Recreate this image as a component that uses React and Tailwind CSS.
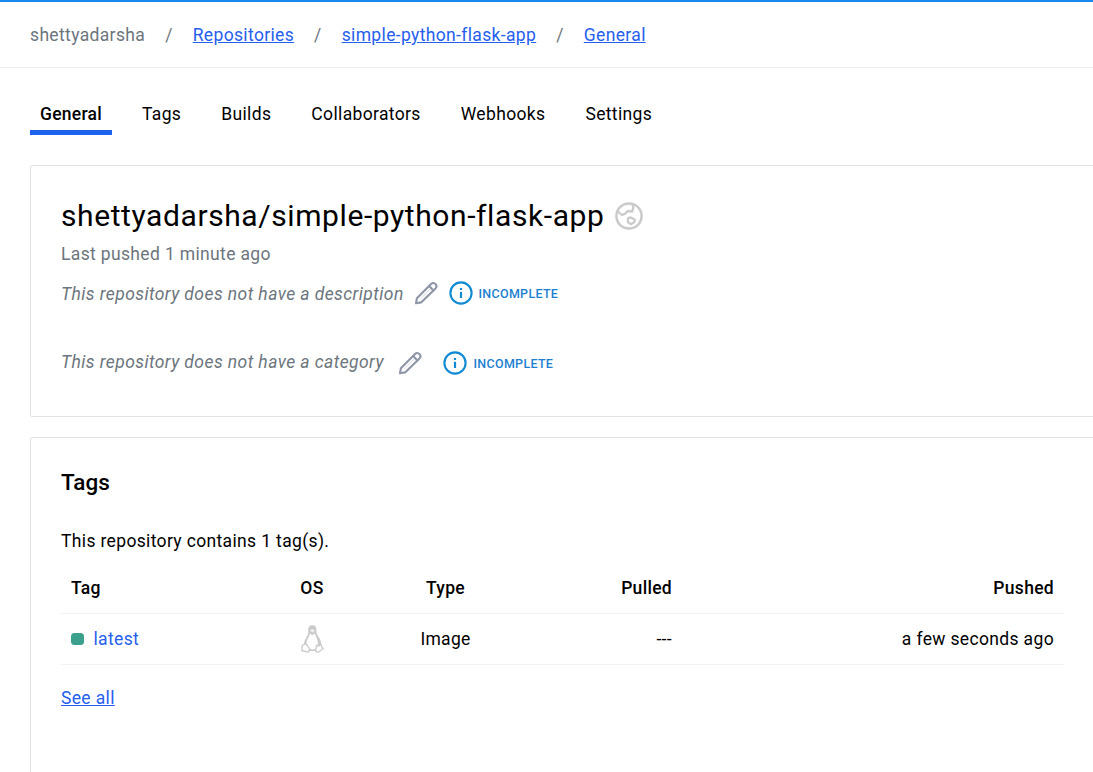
import React from "react";

function GlobeIcon() {
  return (
    <svg className="size-7 shrink-0" viewBox="0 0 28 28" fill="none" stroke="#cacaca" strokeWidth="2.5" strokeLinejoin="round">
      <circle cx="14" cy="14" r="12.6" />
      <path d="M2.3 9 L6.9 13 L10.3 11.6 L12.4 9.2 L17.2 9.5 L18.3 5.5 L17.4 2" strokeWidth="2.3" />
      <path d="M12.9 16.4 L15.6 15.4 L19.7 17.5 L19.5 20 L15.8 22.2 L12.9 20 Z" strokeWidth="2.2" />
    </svg>
  );
}

function PencilIcon() {
  return (
    <svg className="size-6 shrink-0" viewBox="0 0 24 24" fill="none" stroke="#8f96a8" strokeWidth="2.1" strokeLinejoin="round" strokeLinecap="round">
      <path d="M2 22.3 L2.9 17.2 L17.3 2.8 C19.8 0.3 24.3 4.4 21.5 7.4 L7.1 21.4 Z" />
      <path d="M15.2 5 L19.4 9.4" />
      <path d="M6.3 18 L16 8.2" strokeWidth="1" opacity="0.35" />
    </svg>
  );
}

function InfoIcon() {
  return (
    <svg className="size-6 shrink-0" viewBox="0 0 24 24" fill="none" stroke="#0f8ad3">
      <circle cx="12" cy="12" r="10.6" strokeWidth="2.1" />
      <path d="M12 7 V9" strokeWidth="2.2" />
      <path d="M12 10.8 V17" strokeWidth="2.2" />
    </svg>
  );
}

function PenguinIcon() {
  return (
    <svg className="mx-auto mb-0.5 h-7 w-[23px]" viewBox="0 0 23 28" strokeLinejoin="round">
      <path d="M11.3 0.3 C8.6 0.3 7.1 2 7.2 4.6 C7.3 8.2 7.5 9 5.6 12 C4 14.6 2.9 16.8 3 20 L6 26 H17 L20.2 20 C20.4 16.5 19.2 14.2 17.6 12 C15.8 9.5 15.4 8.4 15.4 4.8 C15.4 1.8 14 0.3 11.3 0.3 Z" fill="#cacaca" />
      <path d="M8.9 8.8 L11.4 10 L13.8 8.6 C14.3 10.8 16.6 13.6 16.8 17.5 C17 21.8 15.3 24.4 11.3 24.4 C8 24.4 5.5 21 5.5 18 C5.5 14.4 8.3 11.8 8.9 8.8 Z" fill="#fff" />
      <path d="M8.8 5.2 L11.3 4.3 L14 5.2 L11.4 7.6 Z" fill="#f3f3f3" />
      <path d="M1.1 20.8 L3.6 19 L5.4 19.3 L8.4 23.6 L8.3 26 L6.8 27.2 L0.8 25.5 Z" fill="#fff" stroke="#cacaca" strokeWidth="1.3" />
      <path d="M15.4 20.2 L17.5 21 L20 19.4 L20.8 21.8 L22.2 23.5 L17.6 27.1 L15.3 26.8 L14.7 25.4 Z" fill="#fff" stroke="#cacaca" strokeWidth="1.3" />
    </svg>
  );
}

function Incomplete({ className }) {
  return (
    <div className={className}>
      <InfoIcon />
      <span className="text-[12.5px] font-medium tracking-[0.3px] text-[#1d7fd0]">INCOMPLETE</span>
    </div>
  );
}

function Crumb({ children }) {
  return <a className="text-[#2560ed] underline underline-offset-1">{children}</a>;
}

const tabs = ["Tags", "Builds", "Collaborators", "Webhooks", "Settings"];

export default function App() {
  return (
    <div className="flex h-[772px] w-[1093px] flex-col overflow-hidden bg-white font-['Roboto',sans-serif] text-[17.5px] leading-[25px] tracking-[0.35px] text-black">
      <div className="h-0.5 shrink-0 bg-[#1a86ec]" />
      <nav className="flex h-[66px] shrink-0 items-center gap-5 border-b border-[#eeeff0] pt-0.5 pl-[30px] text-[#6c757d]">
        <span>shettyadarsha</span>
        <span>/</span>
        <Crumb>Repositories</Crumb>
        <span>/</span>
        <Crumb>simple-python-flask-app</Crumb>
        <span>/</span>
        <Crumb>General</Crumb>
      </nav>

      <div className="mt-[33px] flex h-[34px] shrink-0 gap-5 pl-[30px]">
        <div className="w-[82px] border-b-[5px] border-[#1d63ed] px-2.5 pt-px font-medium tracking-[0.25px]">General</div>
        {tabs.map((t) => (
          <div key={t} className="px-2.5 pt-px">{t}</div>
        ))}
      </div>

      <section className="mt-[30px] ml-[30px] h-[252px] w-[1080px] shrink-0 rounded-[2px] border border-[#e1e2e6] pt-[30px] pl-[30px]">
        <div className="flex h-10 items-center gap-[11px]">
          <h1 className="text-[30px] leading-10 tracking-[0.59px]">shettyadarsha/simple-python-flask-app</h1>
          <GlobeIcon />
        </div>
        <p className="mt-1.5 text-[#6c757d]">Last pushed 1 minute ago</p>
        <div className="mt-[13px] flex h-[26px] items-center">
          <span className="w-[353px] pt-0.5 tracking-[0.42px] text-[#6c757d] italic">This repository does not have a description</span>
          <PencilIcon />
          <Incomplete className="ml-[11px] flex items-center gap-[5.5px]" />
        </div>
        <div className="mt-11 flex h-[26px] items-center">
          <span className="mb-[3px] w-[337px] pt-px tracking-[0.42px] text-[#6c757d] italic">This repository does not have a category</span>
          <PencilIcon />
          <Incomplete className="ml-[21px] flex items-center gap-[6.5px]" />
        </div>
      </section>

      <section className="mt-5 ml-[30px] h-[400px] w-[1080px] shrink-0 rounded-[2px] border border-[#e1e2e6] pt-7 pl-[30px]">
        <h2 className="text-[22.5px] leading-8 font-medium tracking-[0.05px]">Tags</h2>
        <p className="mt-[31px]">This repository contains 1 tag(s).</p>
        <table className="mt-2 w-[1003px] table-fixed border-collapse">
          <colgroup>
            <col className="w-[200px]" />
            <col className="w-[102px]" />
            <col className="w-[165px]" />
            <col className="w-[154px]" />
            <col />
          </colgroup>
          <thead>
            <tr className="h-[51px] border-b border-[#f0f1f2] [&>th]:px-2.5 [&>th]:pt-0.5 [&>th]:pb-0 [&>th]:font-medium [&>th]:tracking-[0.3px]">
              <th className="text-left">Tag</th>
              <th className="text-center">OS</th>
              <th className="text-center">Type</th>
              <th className="text-right">Pulled</th>
              <th className="text-right">Pushed</th>
            </tr>
          </thead>
          <tbody>
            <tr className="h-[51px] border-b border-[#f0f1f2] [&>td]:px-2.5 [&>td]:pt-0.5 [&>td]:pb-0">
              <td>
                <div className="flex items-center gap-[9.5px] tracking-[0.35px] text-[#2560ed]">
                  <span className="mb-0.5 h-3 w-[13px] rounded-[3.5px] bg-[#3ba08d]" />
                  latest
                </div>
              </td>
              <td>
                <PenguinIcon />
              </td>
              <td className="text-center tracking-[0.25px]">Image</td>
              <td className="text-right">---</td>
              <td className="text-right">a few seconds ago</td>
            </tr>
          </tbody>
        </table>
        <a className="mt-[21px] inline-block text-[#2560ed] underline underline-offset-1">See all</a>
      </section>
    </div>
  );
}
